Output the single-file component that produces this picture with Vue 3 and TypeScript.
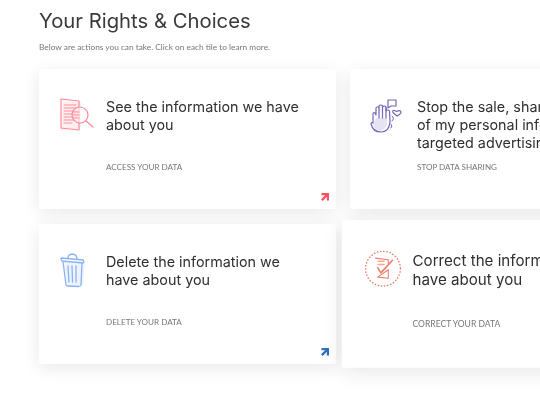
<script setup lang="ts">
interface Tile {
  id: string
  title: string
  label: string
  arrow: string
  active?: boolean
}

const tiles: Tile[] = [
  { id: 'see', title: 'See the information we have about you', label: 'ACCESS YOUR DATA', arrow: '#ff5062' },
  { id: 'stop', title: 'Stop the sale, sharing or use of my personal information for targeted advertising', label: 'STOP DATA SHARING', arrow: '#6a5fb0' },
  { id: 'delete', title: 'Delete the information we have about you', label: 'DELETE YOUR DATA', arrow: '#2f6fc2' },
  { id: 'correct', title: 'Correct the information we have about you', label: 'CORRECT YOUR DATA', arrow: '#ee6b55', active: true },
]
</script>

<template>
  <main class="page">
    <h1 class="heading">Your Rights &amp; Choices</h1>
    <p class="intro">Below are actions you can take. Click on each tile to learn more.</p>
    <section class="grid">
      <article v-for="tile in tiles" :key="tile.id" class="tile" :class="{ active: tile.active }">
        <svg class="icon" viewBox="0 0 36 36" fill="none" stroke-linecap="round" stroke-linejoin="round">
          <g v-if="tile.id === 'see'" stroke="#ff8a98" stroke-width="1.2">
            <path d="M4 3 L22 5 V32 L2 34 Z" fill="#fff0f2" stroke="none" />
            <path d="M2 2 L20 4 V33 L2 31 Z" />
            <path d="M5 8 H17 M5 11 H18 M5 14 H18 M5 17 H18 M5 20 H18 M5 23 H17 M5 26 H13" stroke-width="1" />
            <circle cx="21" cy="18" r="8" fill="#fff" fill-opacity=".55" />
            <path d="M14 15 H20 M14 18 H20 M14 21 H20" />
            <path d="M27 24 L34 30" stroke-width="1.3" />
          </g>
          <g v-else-if="tile.id === 'stop'" stroke="#7268b8" stroke-width="1.2">
            <path d="M6 21 H17 V27 Q15 33 10 34 Q4 33 3 27 Z" fill="#e6e4f3" stroke="none" />
            <path d="M3 26 V17 Q3 15 5 16 L6 18 V11 Q7.5 8.5 9 11 V9 Q11 7 12.5 9 V10 Q14.5 8 16 10 V14 Q18 12 19.5 14 L20 25 Q19 35 11 35 Q3 35 1 27 Q1 25 3 26 Z" />
            <path d="M9 11 V21 M12.5 9 V21 M16 10 V21" />
            <path d="M18 3 H26 V9 H21 L18 11 Z" />
            <path d="M27 19 L23 15.5 Q22 13 24.5 13.5 L26.5 14.5 Q30 12.5 31 15 Q31 17 27 19 Z" />
            <path d="M22 19 Q25 21 22 24 M21 27 Q23 29 21 31" stroke-width="1" />
          </g>
          <g v-else-if="tile.id === 'delete'" stroke="#8db2f4" stroke-width="1.3">
            <path d="M5 10 L26 9 L24 33 L8 35 Z" fill="#eef4fe" stroke="none" />
            <path d="M2 6 L24 8 Q25.5 10 24 11 L3 9 Q1.5 7 2 6 Z" />
            <path d="M9 6 Q9 2 14 2 Q18 3 18 7" />
            <path d="M4 9.5 L7 33 Q7 34 9 34 L20 34.5 Q21.5 34 22 33 L23 11" />
            <path d="M9 14 L10 30 M13 14 L13.5 30 M17 14 L17 30" />
          </g>
          <g v-else stroke="#ee7c69" stroke-width="1">
            <circle cx="19" cy="18" r="16.5" stroke-width="1.3" stroke-dasharray="0.4 2.6" />
            <path d="M12 8 L24 9.5 V13 M24 19 V27 L14 26 Z" />
            <path d="M14.5 11 H20 M14.5 14 H20" stroke-width="1.5" stroke="#f4a79a" />
            <path d="M14 17 L17 22 L28 10" stroke-width="1.5" />
          </g>
        </svg>
        <div class="copy">
          <h2 class="title">{{ tile.title }}</h2>
          <span class="label">{{ tile.label }}</span>
        </div>
        <svg class="arrow" viewBox="0 0 8 8" :style="{ color: tile.arrow }">
          <path d="M0.5 0 H8 V7.5 H5.8 V3.8 L1.8 8 L0 6.2 L4.2 2.2 H0.5 Z" fill="currentColor" />
        </svg>
      </article>
    </section>
  </main>
</template>

<style scoped>
.page {
  width: 540px;
  height: 400px;
  overflow: hidden;
  box-sizing: border-box;
  padding: 6px 0 0 39px;
  background: #fff;
  font-family: "Inter", sans-serif;
  filter: blur(0.3px);
}
.heading {
  margin: 0;
  font-size: 20.3px;
  line-height: 30px;
  font-weight: 400;
  color: #3a3a3a;
}
.intro {
  margin: 5px 0 0;
  font-family: "Lato", sans-serif;
  font-size: 8.3px;
  line-height: 12px;
  color: #777;
  white-space: nowrap;
}
.grid {
  display: grid;
  grid-template-columns: 297px 297px;
  grid-auto-rows: 140px;
  column-gap: 14px;
  row-gap: 15px;
  margin-top: 16px;
}
.tile {
  position: relative;
  display: flex;
  gap: 11px;
  padding: 28px 23px 0 20px;
  background: #fff;
  border-radius: 2px;
  box-shadow: 0 4px 18px rgba(0, 0, 0, 0.09);
}
.tile.active {
  transform: scale(1.055);
  z-index: 1;
}
.icon {
  flex: none;
  width: 36px;
  height: 36px;
  overflow: visible;
}
.copy {
  display: flex;
  flex-direction: column;
  min-width: 0;
}
.title {
  margin: 0;
  height: 54px;
  padding-top: 1px;
  font-size: 14.35px;
  line-height: 18px;
  font-weight: 400;
  color: #2f2f2f;
}
.label {
  margin-top: 9px;
  font-family: "Lato", sans-serif;
  font-size: 8.1px;
  line-height: 12px;
  color: #777;
}
.arrow {
  position: absolute;
  right: 7px;
  bottom: 8px;
  width: 8px;
  height: 8px;
}
</style>

<style>
html, body { margin: 0; overflow: hidden; background: #fff; }
</style>
